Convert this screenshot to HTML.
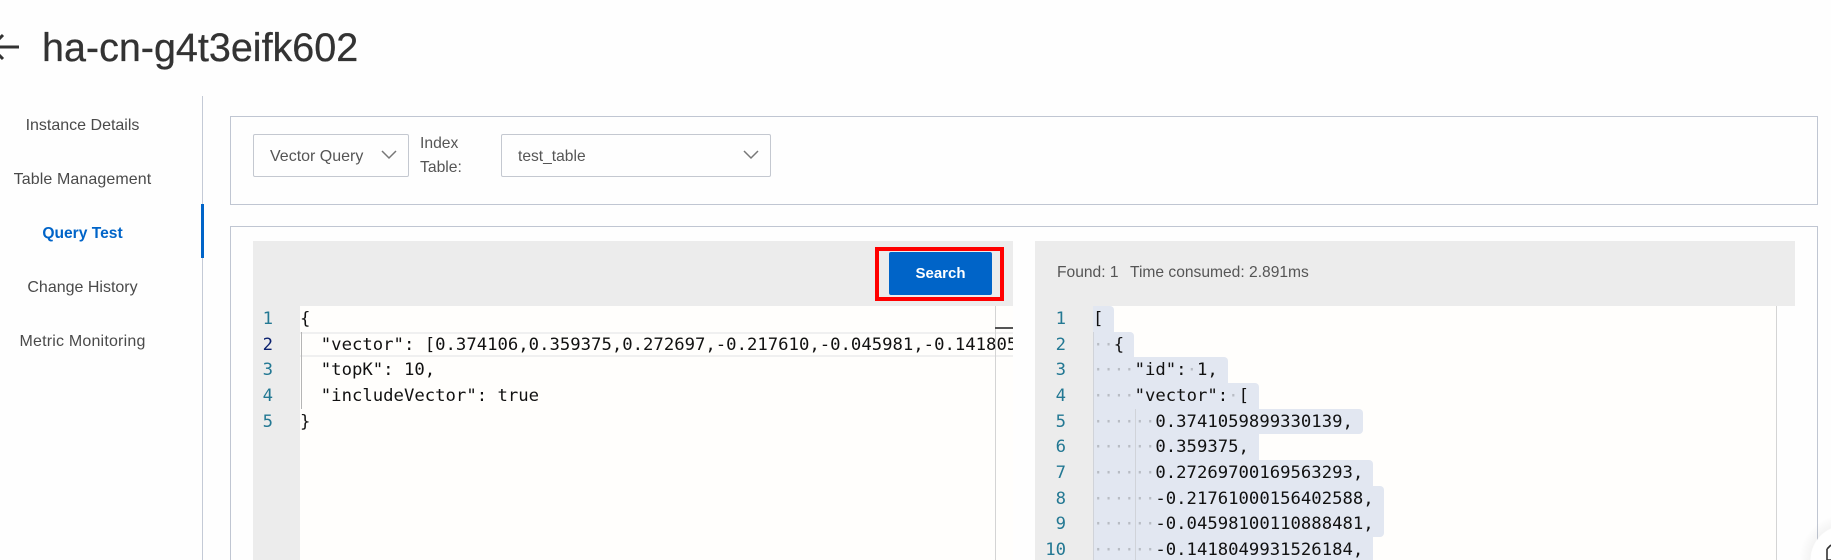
<!DOCTYPE html>
<html><head><meta charset="utf-8">
<style>
html,body{margin:0;padding:0;background:#fefefe;width:1831px;height:560px;overflow:hidden;}
#w{width:1831px;height:560px;position:relative;overflow:hidden;font-family:"Liberation Sans",sans-serif;color:#333;}
.a{position:absolute;}
.nav{position:absolute;left:0;width:165px;text-align:center;font-size:16px;line-height:20px;color:#4a4a4a;white-space:nowrap;}
.box{position:absolute;border:1px solid #c0c6d2;box-sizing:border-box;}
.sel{position:absolute;border:1px solid #c4c8d0;border-radius:2px;box-sizing:border-box;height:43px;top:134px;background:#fefefe;line-height:43px;color:#555;padding-left:16px;}
.mono{font-family:"DejaVu Sans Mono","Liberation Mono",monospace;font-size:17.27px;line-height:25.67px;color:#111;white-space:pre;}
.ln{position:absolute;font-family:"DejaVu Sans Mono","Liberation Mono",monospace;font-size:17.27px;line-height:25.67px;color:#237893;text-align:right;white-space:pre;overflow:hidden;}
.s{position:absolute;background:#e2e7f1;}
.d{color:#b8bcc4;}
</style></head><body><div id="w">

<svg class="a" style="left:0;top:30px" width="24" height="34"><path d="M3 5 L-9 17 L3 29 M-8 17 H19" fill="none" stroke="#333" stroke-width="3"/></svg>
<div class="a" style="left:42px;top:26px;font-size:39.5px;line-height:44px;color:#333;white-space:nowrap;-webkit-text-stroke:.3px #333">ha-cn-g4t3eifk602</div>

<div class="a" style="left:202px;top:96px;width:1px;height:464px;background:#c4cad6"></div>
<div class="a" style="left:201px;top:204px;width:3px;height:54px;background:#0064c8"></div>
<div class="nav" style="top:116px">Instance Details</div>
<div class="nav" style="top:170px;letter-spacing:.1px">Table Management</div>
<div class="nav" style="top:224px;color:#0064c8;font-weight:bold;font-size:15.6px">Query Test</div>
<div class="nav" style="top:278px">Change History</div>
<div class="nav" style="top:332px;letter-spacing:.2px">Metric Monitoring</div>

<div class="box" style="left:230px;top:116px;width:1588px;height:89px"></div>
<div class="sel" style="left:253px;width:156px;font-size:16px">Vector Query</div>
<svg class="a" style="left:380px;top:148px" width="18" height="14"><path d="M2 3 L9 10 L16 3" fill="none" stroke="#777" stroke-width="1.5"/></svg>
<div class="a" style="left:420px;top:132px;font-size:15.7px;line-height:24px;color:#555">Index<br>Table:</div>
<div class="sel" style="left:501px;width:270px;font-size:15.6px">test_table</div>
<svg class="a" style="left:742px;top:148px" width="18" height="14"><path d="M2 3 L9 10 L16 3" fill="none" stroke="#777" stroke-width="1.5"/></svg>

<div class="box" style="left:230px;top:226px;width:1588px;height:334px;border-bottom:0"></div>

<!-- left panel -->
<div class="a" style="left:253px;top:241px;width:760px;height:65px;background:#ececec"></div>
<div class="a" style="left:253px;top:306px;width:47px;height:254px;background:#ececec"></div>
<div class="a" style="left:300px;top:306px;width:713px;height:254px;background:#fffefc"></div>
<div class="a" style="left:300px;top:332px;width:713px;height:25px;border-top:2px solid #f0f0f0;border-bottom:2px solid #f0f0f0;box-sizing:border-box"></div>
<div class="a" style="left:301px;top:332px;width:1px;height:77px;background:#b5b5b5"></div>
<div class="a" style="left:995px;top:306px;width:1px;height:254px;background:#d4d4d4"></div>
<div class="a" style="left:995px;top:327px;width:18px;height:2px;background:#555"></div>

<div class="a" style="left:875px;top:247px;width:129px;height:54px;border:4px solid #f00;box-sizing:border-box"></div>
<div class="a" style="left:889px;top:252px;width:103px;height:43px;background:#0064c8;border-radius:2px;color:#fff;font-weight:bold;font-size:15px;line-height:43px;text-align:center">Search</div>

<div class="ln" style="left:253px;top:307px;width:20px;height:253px">1
<span style="color:#0b216f">2</span>
3
4
5</div>
<div class="a mono" style="left:300px;top:307px;width:713px;height:253px;overflow:hidden">{
  "vector": [0.374106,0.359375,0.272697,-0.217610,-0.045981,-0.141805,0.1
  "topK": 10,
  "includeVector": true
}</div>

<!-- right panel -->
<div class="a" style="left:1035px;top:241px;width:760px;height:65px;background:#ececec"></div>
<div class="a" style="left:1035px;top:306px;width:58px;height:254px;background:#ececec"></div>
<div class="a" style="left:1093px;top:306px;width:683px;height:254px;background:#fffefc"></div>
<div class="a" style="left:1776px;top:306px;width:1px;height:254px;background:#d4d4d4"></div>
<div class="a" style="left:1057px;top:263px;font-size:15.6px;line-height:20px;color:#555;white-space:pre">Found: 1</div>
<div class="a" style="left:1130px;top:263px;font-size:15.6px;line-height:20px;color:#555;white-space:pre">Time consumed: 2.891ms</div>

<div class="s" style="left:1093px;top:306px;width:21px;height:26px;border-radius:0 4px 0 0"></div>
<div class="s" style="left:1093px;top:332px;width:41px;height:25px;border-radius:0 4px 0 0"></div>
<div class="s" style="left:1093px;top:357px;width:135px;height:26px;border-radius:0 4px 0 0"></div>
<div class="s" style="left:1093px;top:383px;width:166px;height:26px;border-radius:0 4px 0 0"></div>
<div class="s" style="left:1093px;top:409px;width:270px;height:25px;border-radius:0 4px 4px 0"></div>
<div class="s" style="left:1093px;top:434px;width:166px;height:26px"></div>
<div class="s" style="left:1093px;top:460px;width:280px;height:26px;border-radius:0 4px 0 0"></div>
<div class="s" style="left:1093px;top:486px;width:291px;height:51px;border-radius:0 4px 4px 0"></div>
<div class="s" style="left:1093px;top:537px;width:280px;height:23px"></div>
<div class="a" style="left:1093px;top:332px;width:1px;height:228px;background:#d0d3d9"></div>
<div class="a" style="left:1135px;top:409px;width:1px;height:151px;background:#d0d3d9"></div>

<div class="ln" style="left:1035px;top:307px;width:31px;height:253px"> 1
 2
 3
 4
 5
 6
 7
 8
 9
10</div>
<div class="a mono" style="left:1093px;top:307px;width:680px;height:253px;overflow:hidden">[
<span class="d">··</span>{
<span class="d">····</span>"id":<span class="d">·</span>1,
<span class="d">····</span>"vector":<span class="d">·</span>[
<span class="d">······</span>0.3741059899330139,
<span class="d">······</span>0.359375,
<span class="d">······</span>0.27269700169563293,
<span class="d">······</span>-0.21761000156402588,
<span class="d">······</span>-0.04598100110888481,
<span class="d">······</span>-0.1418049931526184,</div>

<!-- floating corner button -->
<div class="a" style="left:1795px;top:510px;width:36px;height:50px;background:radial-gradient(circle 46px at 50px 50px,#fff 0,#fff 34px,rgba(0,0,0,.04) 35px,rgba(0,0,0,0) 46px)"></div>
<svg class="a" style="left:1820px;top:540px" width="11" height="20"><path d="M7 9 L11 5 M7 9 V20 M7 20 H11" fill="none" stroke="#333" stroke-width="1.6"/></svg>

</div></body></html>
